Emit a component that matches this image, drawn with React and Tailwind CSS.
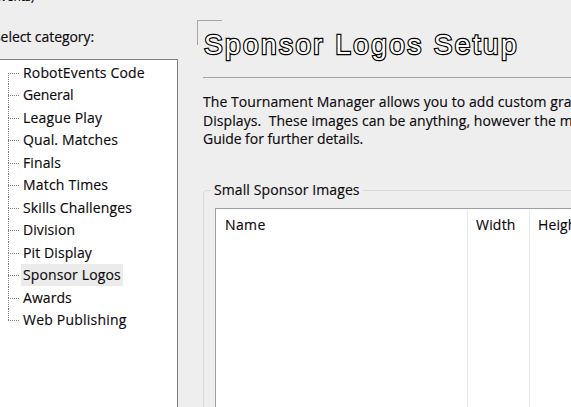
const categories = [
  ['RobotEvents Code', 'tracking-[0.16px]'],
  ['General', 'tracking-[-0.15px]'],
  ['League Play', 'tracking-[0.16px]'],
  ['Qual. Matches', 'tracking-[0.14px]'],
  ['Finals', 'tracking-[0.1px]'],
  ['Match Times', 'tracking-[0.2px]'],
  ['Skills Challenges', 'tracking-[0.13px]'],
  ['Division', 'tracking-[0.08px]'],
  ['Pit Display', 'tracking-[0.1px]'],
  ['Sponsor Logos', 'tracking-[0.13px]'],
  ['Awards', 'tracking-[0.05px]'],
  ['Web Publishing', 'tracking-[0.22px]'],
];

function Sidebar() {
  return (
    <aside className="flex w-[178px] shrink-0 flex-col">
      <div className="h-[26px] overflow-hidden">
        <div className="-mt-[10px] -ml-[6px] text-[12px] leading-[14px] text-black">Events)</div>
      </div>
      <div className="-ml-[7px] h-[33px] leading-[22px] tracking-[-0.06px]">Select category:</div>
      <ul className="flex-1 border-t border-r border-[#7b8088] bg-white pt-[1.5px] pl-2">
        {categories.map(([name, tracking], i) => (
          <li key={name} className="flex h-[22.5px]">
            <span className="flex w-[13px] shrink-0 flex-col">
              <span className={i === 0 ? 'h-[11px]' : 'h-[11px] border-l border-dotted border-[#808080]'} />
              <span className={i === 11 ? 'mr-[2px] flex-1 border-t border-dotted border-[#808080]' : 'mr-[2px] flex-1 border-t border-l border-dotted border-[#808080]'} />
            </span>
            <span className={`${tracking} ${name === 'Sponsor Logos' ? 'bg-[#ebebeb]' : ''} h-[22px] px-[2px] leading-[22px]`}>
              {name}
            </span>
          </li>
        ))}
      </ul>
    </aside>
  );
}

function SponsorTable() {
  return (
    <fieldset className="ml-[25px] mt-[30px] flex h-[260px] w-[500px] min-w-0 flex-col rounded-tl-sm border border-[#d5dcdf] pl-[11px]">
      <legend className="-ml-[4px] h-[20px] px-[3px] leading-[20px] tracking-[0.1px]">Small Sponsor Images</legend>
      <div className="mt-[8px] flex flex-1 border-t border-l border-[#9c9ea6] bg-white leading-[22px]">
        <div className="w-[251px] pt-[5px] pl-[9px] tracking-[0.4px]">Name</div>
        <div className="mt-px w-[62px] border-l border-[#dfe9f1] pt-[4px] pl-2 tracking-[0.2px]">Width</div>
        <div className="mt-px flex-1 border-l border-[#dfe9f1] pt-[4px] pl-2 tracking-[0.1px]">Height</div>
      </div>
    </fieldset>
  );
}

export default function App() {
  return (
    <div className="flex h-[407px] w-[571px] overflow-hidden bg-[#eeeeee] font-['Open_Sans','Noto_Sans',sans-serif] text-[14px] whitespace-nowrap text-[#0c080c] [-webkit-text-stroke:0.15px_#0c080c]">
      <Sidebar />
      <main className="w-[393px] overflow-hidden">
        <div className="h-[77px] pt-5 pl-[19px]">
          <div className="relative h-[56px] pl-[7px]">
            <span className="absolute top-0 left-0 h-[25px] w-[25px] border-t border-l border-[#a6a6aa]" />
            <h1 className="relative pt-[7px] font-['Liberation_Sans',Arial,sans-serif] text-[28px] leading-[36px] font-normal tracking-[2.4px] text-white [-webkit-text-stroke:2.4px_#000] [paint-order:stroke]">
              Sponsor Logos Setup
            </h1>
          </div>
        </div>
        <div className="ml-[25px] border-t border-[#a5a2a6]" />
        <p className="mt-[15px] ml-[25px] h-[57px] leading-[18.7px] whitespace-pre tracking-[0.07px]">
          The Tournament Manager allows you to add custom graphics to the<br />
          Displays.  These images can be anything, however the most common<br />
          <span className="tracking-[-0.04px]">Guide for further details.</span>
        </p>
        <SponsorTable />
      </main>
    </div>
  );
}
